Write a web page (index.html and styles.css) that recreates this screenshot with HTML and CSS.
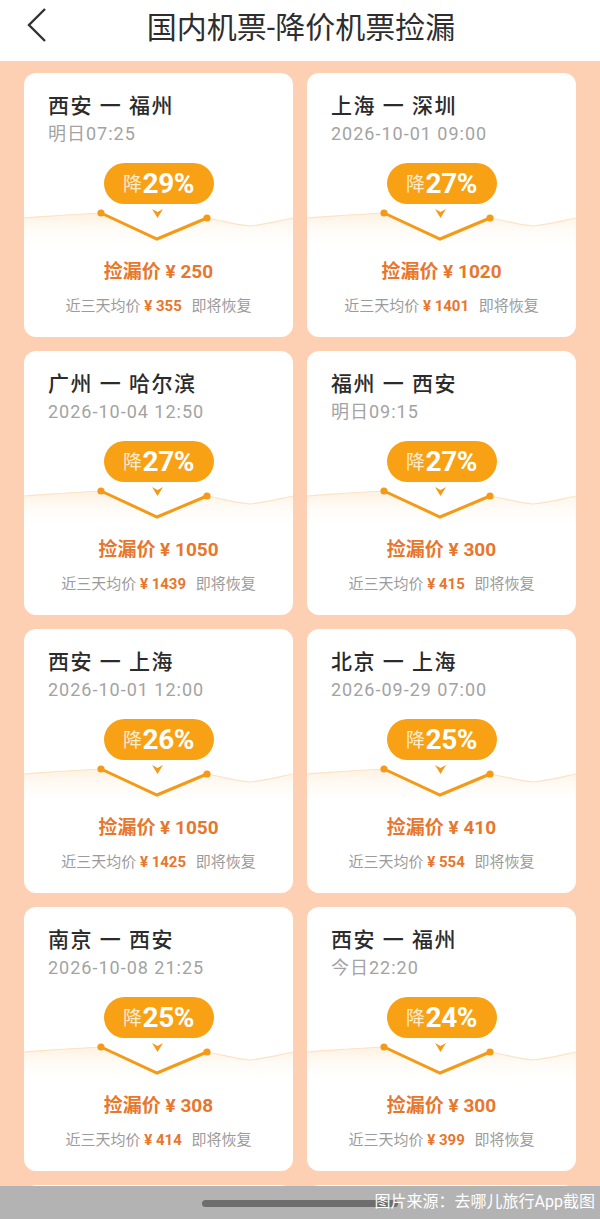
FILE: index.html
```html
<!DOCTYPE html>
<html>
<head lang="zh">
    <meta charset="UTF-8">
    <title>国内机票-降价机票捡漏</title>
    <link rel="stylesheet" href="styles.css">
</head>
<body>
  <svg class="defs" width="0" height="0">
    <defs>
      <linearGradient id="fade" x1="0" y1="0" x2="0" y2="1">
        <stop offset="0" stop-color="#fdebd3" stop-opacity="0.7"/>
        <stop offset="1" stop-color="#fff" stop-opacity="0"/>
      </linearGradient>
      <symbol id="chart" viewBox="0 0 269 46">
        <path d="M0,14 C30,12 55,10 77,9 L133,36 L183,14 C200,17 212,21 226,22 C245,20 258,16 269,14 L269,46 L0,46 Z" fill="url(#fade)"/>
        <path d="M0,14 C30,12 55,10 77,9 M183,14 C200,17 212,21 226,22 C245,20 258,16 269,14" fill="none" stroke="#fbe3c6" stroke-width="1.2"/>
        <path d="M77,9 L133,35 L183,14" fill="none" stroke="#f49a17" stroke-width="3" stroke-linejoin="miter"/>
        <circle cx="77" cy="9" r="3.6" fill="#f49a17"/>
        <circle cx="183" cy="14" r="3.6" fill="#f49a17"/>
        <path d="M128,5 L133.5,8 L139,5 L133.5,14 Z" fill="#f49a17"/>
      </symbol>
    </defs>
  </svg>

  <div class="header">
    <svg class="back" width="24" height="36" viewBox="0 0 24 36">
      <path d="M20,2 L4,18 L20,34" fill="none" stroke="#333" stroke-width="2.4"/>
    </svg>
    <h1>国内机票-降价机票捡漏</h1>
  </div>

  <div class="list">
    <div class="card">
      <div class="route">西安 一 福州</div>
      <div class="time">明日07:25</div>
      <div class="badge"><span class="jiang">降</span>29%</div>
      <svg class="chart"><use href="#chart"/></svg>
      <div class="price">捡漏价 ¥ 250</div>
      <div class="avg">近三天均价 <b>¥ 355</b> 即将恢复</div>
    </div>
    <div class="card">
      <div class="route">上海 一 深圳</div>
      <div class="time">2026-10-01 09:00</div>
      <div class="badge"><span class="jiang">降</span>27%</div>
      <svg class="chart"><use href="#chart"/></svg>
      <div class="price">捡漏价 ¥ 1020</div>
      <div class="avg">近三天均价 <b>¥ 1401</b> 即将恢复</div>
    </div>
    <div class="card">
      <div class="route">广州 一 哈尔滨</div>
      <div class="time">2026-10-04 12:50</div>
      <div class="badge"><span class="jiang">降</span>27%</div>
      <svg class="chart"><use href="#chart"/></svg>
      <div class="price">捡漏价 ¥ 1050</div>
      <div class="avg">近三天均价 <b>¥ 1439</b> 即将恢复</div>
    </div>
    <div class="card">
      <div class="route">福州 一 西安</div>
      <div class="time">明日09:15</div>
      <div class="badge"><span class="jiang">降</span>27%</div>
      <svg class="chart"><use href="#chart"/></svg>
      <div class="price">捡漏价 ¥ 300</div>
      <div class="avg">近三天均价 <b>¥ 415</b> 即将恢复</div>
    </div>
    <div class="card">
      <div class="route">西安 一 上海</div>
      <div class="time">2026-10-01 12:00</div>
      <div class="badge"><span class="jiang">降</span>26%</div>
      <svg class="chart"><use href="#chart"/></svg>
      <div class="price">捡漏价 ¥ 1050</div>
      <div class="avg">近三天均价 <b>¥ 1425</b> 即将恢复</div>
    </div>
    <div class="card">
      <div class="route">北京 一 上海</div>
      <div class="time">2026-09-29 07:00</div>
      <div class="badge"><span class="jiang">降</span>25%</div>
      <svg class="chart"><use href="#chart"/></svg>
      <div class="price">捡漏价 ¥ 410</div>
      <div class="avg">近三天均价 <b>¥ 554</b> 即将恢复</div>
    </div>
    <div class="card">
      <div class="route">南京 一 西安</div>
      <div class="time">2026-10-08 21:25</div>
      <div class="badge"><span class="jiang">降</span>25%</div>
      <svg class="chart"><use href="#chart"/></svg>
      <div class="price">捡漏价 ¥ 308</div>
      <div class="avg">近三天均价 <b>¥ 414</b> 即将恢复</div>
    </div>
    <div class="card">
      <div class="route">西安 一 福州</div>
      <div class="time">今日22:20</div>
      <div class="badge"><span class="jiang">降</span>24%</div>
      <svg class="chart"><use href="#chart"/></svg>
      <div class="price">捡漏价 ¥ 300</div>
      <div class="avg">近三天均价 <b>¥ 399</b> 即将恢复</div>
    </div>
    <div class="card"></div>
    <div class="card"></div>
  </div>

  <div class="bottom">
    <div class="homebar"></div>
    <div class="source">图片来源：去哪儿旅行App截图</div>
  </div>
</body>
</html>
```

FILE: styles.css
```css
*{
  margin: 0;
  padding: 0;
  box-sizing: border-box;
}
html, body{
  height: 100%;
  overflow: hidden;
}
body{
  background: #fdd0b3;
  font-family: Roboto, "Noto Sans CJK SC", sans-serif;
  color: #333;
}
.defs{
  position: absolute;
}
.header{
  height: 61px;
  background: #fff;
  position: relative;
  display: flex;
  justify-content: center;
}
.back{
  position: absolute;
  left: 25px;
  top: 7px;
}
.header h1{
  font-size: 30px;
  font-weight: 400;
  line-height: 56px;
  margin-left: 2px;
  color: #2e2e2e;
}
.list{
  display: grid;
  grid-template-columns: 269px 269px;
  gap: 14px;
  padding: 12px 24px 0;
}
.card{
  height: 264px;
  background: #fff;
  border-radius: 12px;
  padding-top: 21px;
  display: flex;
  flex-direction: column;
  align-items: center;
}
.route, .time{
  align-self: flex-start;
  padding-left: 24px;
}
.route{
  font-size: 21px;
  line-height: 24px;
  font-weight: 500;
  letter-spacing: 1.5px;
  color: #2b2b2b;
}
.time{
  font-size: 18px;
  line-height: 22px;
  margin-top: 5px;
  letter-spacing: 1px;
  color: #a3a3a3;
}
.badge{
  margin-top: 18px;
  width: 110px;
  height: 41px;
  border-radius: 21px;
  background: #f8a114;
  color: #fff;
  font-size: 28px;
  font-weight: 700;
  line-height: 41px;
  text-align: center;
  letter-spacing: -0.5px;
}
.jiang{
  font-size: 19px;
  font-weight: 400;
  color: #feecd0;
  margin-right: 1px;
  vertical-align: 2px;
}
.chart{
  width: 269px;
  height: 46px;
  display: block;
}
.price{
  margin-top: 10px;
  font-size: 19px;
  line-height: 24px;
  font-weight: 700;
  color: #e8762c;
}
.avg{
  margin-top: 12px;
  font-size: 15px;
  line-height: 20px;
  color: #9b9b9b;
}
.avg b{
  color: #e8762c;
  font-weight: 700;
  margin-right: 6px;
}
.bottom{
  position: fixed;
  left: 0;
  right: 0;
  bottom: 0;
  height: 33px;
  background: #b3b3b3;
}
.homebar{
  position: absolute;
  left: 202px;
  top: 14px;
  width: 196px;
  height: 7px;
  border-radius: 4px;
  background: #6e6e6e;
}
.source{
  position: absolute;
  right: 5px;
  top: 4px;
  font-size: 16px;
  line-height: 24px;
  color: #fff;
}
```
